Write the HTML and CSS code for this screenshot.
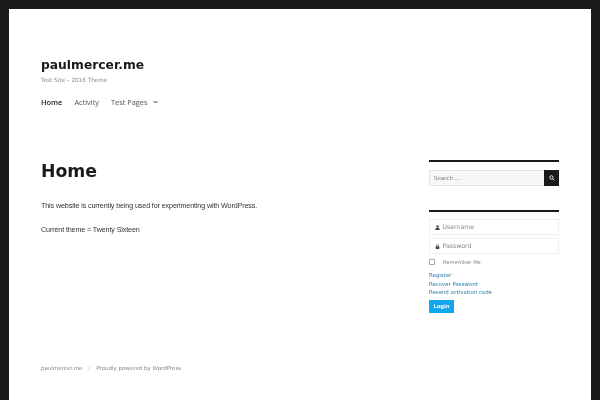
FILE: index.html
```html
<!DOCTYPE html>
<html lang="en">
<head>
<meta charset="utf-8">
<title>paulmercer.me</title>
<link rel="stylesheet" href="styles.css">
</head>
<body>
<div class="page">
  <header class="masthead">
    <h1 class="site-title">paulmercer.me</h1>
    <p class="tagline">Test Site – 2016 Theme</p>
    <nav class="nav">
      <a class="nav-link current">Home</a>
      <a class="nav-link">Activity</a>
      <a class="nav-link has-sub">Test Pages
        <svg class="chev" viewBox="0 0 8 6" width="5" height="4"><path d="M1 1.5 L4 4.5 L7 1.5" fill="none" stroke="#1a1a1a" stroke-width="1.4"/></svg>
      </a>
    </nav>
  </header>
  <div class="columns">
    <main class="content">
      <h2 class="entry-title">Home</h2>
      <p class="para">This website is currently being used for experimenting with WordPress.</p>
      <p class="para">Current theme = Twenty Sixteen</p>
    </main>
    <aside class="sidebar">
      <section class="widget search-widget">
        <div class="search">
          <span class="search-input">Search ...</span>
          <span class="search-btn">
            <svg viewBox="0 0 10 10" width="6" height="6"><circle cx="4" cy="4" r="2.8" fill="none" stroke="#fff" stroke-width="1.4"/><path d="M6 6 L9 9" stroke="#fff" stroke-width="1.6"/></svg>
          </span>
        </div>
      </section>
      <section class="widget login-widget">
        <div class="field">
          <svg viewBox="0 0 10 10" width="5" height="5"><circle cx="5" cy="2.8" r="2.4" fill="#444"/><path d="M0.5 10 C0.5 6 3 5.5 5 5.5 C7 5.5 9.500 6 9.500 10 Z" fill="#444"/></svg>
          <span>Username</span>
        </div>
        <div class="field">
          <svg viewBox="0 0 10 10" width="5" height="5"><path d="M3 5 V3 A2 2 0 0 1 7 3 V5" fill="none" stroke="#444" stroke-width="1.300"/><rect x="1.500" y="4.500" width="7" height="5.500" fill="#444"/></svg>
          <span>Password</span>
        </div>
        <label class="remember"><span class="check"></span><span>Remember Me</span></label>
        <ul class="links">
          <li>Register</li>
          <li>Recover Password</li>
          <li>Resend activation code</li>
        </ul>
        <span class="login-btn">Login</span>
      </section>
    </aside>
  </div>
  <footer class="footer">
    <span>paulmercer.me</span><span class="sep">/</span><span>Proudly powered by WordPress</span>
  </footer>
</div>
</body>
</html>
```
FILE: styles.css
```css
* { box-sizing: border-box; }
html, body { margin: 0; padding: 0; height: 100%; overflow: hidden; }
body { background: #fff; border: solid #1a1a1a; border-width: 9px 9px 0 9px; font-family: "Liberation Sans", Arial, sans-serif; color: #1a1a1a; }
.page { height: 391px; padding: 0 32px; display: flex; flex-direction: column; will-change: transform; }
.masthead { padding-top: 47px; height: 151px; }
.site-title { margin: 0; font: bold 12.300px/18px "DejaVu Sans", sans-serif; color: #1a1a1a; }
.tagline { margin: 1px 0 0; font: 5.700px/10px "DejaVu Sans", sans-serif; color: #888; }
.nav { display: flex; gap: 12px; margin-top: 10px; font: 7.400px/14px "Open Sans", sans-serif; }
.nav-link { color: #555; display: inline-flex; align-items: center; gap: 5px; }
.nav-link.current { font-weight: 600; color: #1a1a1a; }
.columns { display: flex; justify-content: space-between; flex: 1; }
.content { width: 290px; }
.entry-title { margin: 0; font: bold 17.300px/22px "DejaVu Sans", sans-serif; }
.para { margin: 0 0 14px; font: 7.200px/10px "Liberation Sans", Arial, sans-serif; letter-spacing: -0.135px; color: #333; white-space: nowrap; }
.entry-title + .para { margin-top: 19px; }
.sidebar { width: 130px; }
.widget { border-top: 2px solid #1a1a1a; }
.search-widget { height: 50px; padding-top: 8px; }
.search { display: flex; height: 16px; }
.search-input { flex: 1; background: #f7f7f7; border: 1px solid #e4e4e4; border-right: 0; font: 5.500px/14px "DejaVu Sans", sans-serif; color: #777; padding-left: 4px; }
.search-btn { width: 15px; background: #1a1a1a; display: flex; align-items: center; justify-content: center; }
.login-widget { padding-top: 7px; }
.field { height: 16px; border: 1px solid #eee; margin-bottom: 3px; display: flex; align-items: center; gap: 2.500px; padding-left: 5px; font: 6.200px/14px "DejaVu Sans", sans-serif; color: #888; }
.remember { display: flex; align-items: center; gap: 8px; font: 5.200px/10px "DejaVu Sans", sans-serif; color: #888; margin-top: 3px; }
.check { width: 6px; height: 6px; border: 1px solid #aaa; background: #fff; }
.links { list-style: none; margin: 4px 0 0; padding: 0; font: 5.400px/8.700px "DejaVu Sans", sans-serif; color: #2a7fa8; }
.login-btn { display: block; width: 25px; margin-top: 3px; background: #0fa6ee; color: #fff; font: bold 5.200px/13px "DejaVu Sans", sans-serif; text-align: center; }
.footer { font: 5.500px/10px "DejaVu Sans", sans-serif; color: #888; height: 41px; padding-top: 4px; display: flex; }
.sep { margin: 0 6px; color: #bbb; }
```
